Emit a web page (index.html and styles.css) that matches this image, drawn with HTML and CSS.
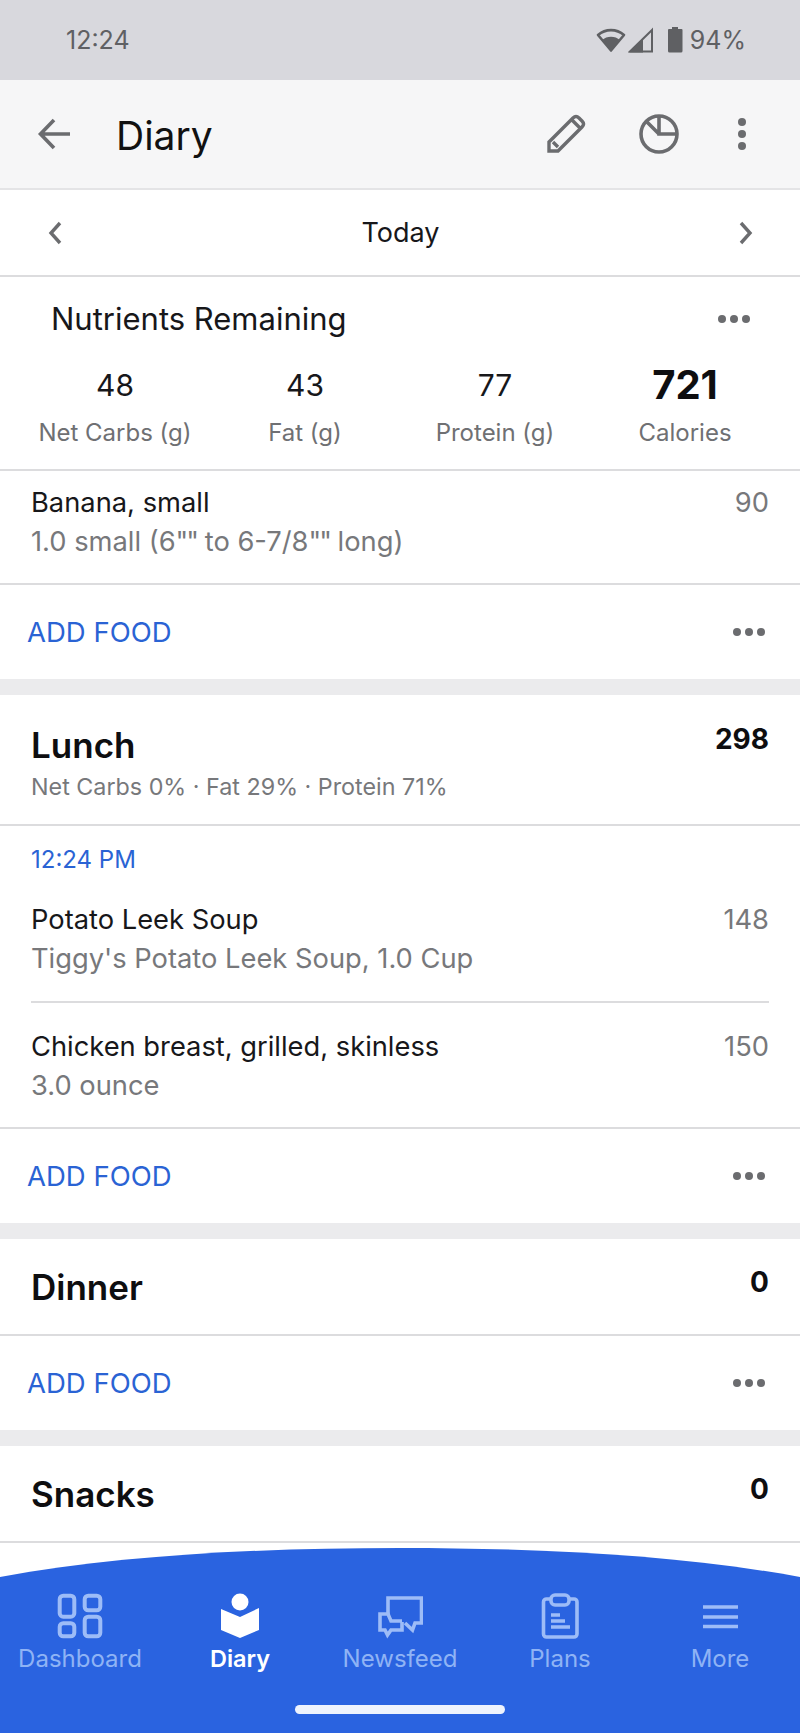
FILE: index.html
```html
<!DOCTYPE html>
<html lang="en">
<head>
  <meta charset="UTF-8">
  <meta name="viewport" content="width=device-width, initial-scale=1">
  <title>Diary</title>
  <link rel="stylesheet" href="styles.css">
</head>
<body>
  <div class="status-bar">
    <span class="status-time">12:24</span>
    <div class="status-icons">
      <svg class="ic-wifi" width="30" height="26" viewBox="0 0 30 26"><path d="M15 23.500 2 8C9.500 1.500 20.500 1.500 28 8Z" fill="none" stroke="#5f6063" stroke-width="2.600" stroke-linejoin="round"/><path d="M15 24 6 13C11 8.500 19 8.500 24 13Z" fill="#5f6063"/></svg>
      <svg class="ic-signal" width="26" height="26" viewBox="0 0 26 26"><path d="M24 3 2 24.500H24Z" fill="none" stroke="#5f6063" stroke-width="2"/><path d="M15 12 1 25.500H15Z" fill="#5f6063"/></svg>
      <svg class="ic-battery" width="16" height="26" viewBox="0 0 16 26"><path d="M5 0H11V2H14.500A1 1 0 0 1 15.500 3V24A1.500 1.500 0 0 1 14 25.500H2.500A1.500 1.500 0 0 1 1 24V3A1 1 0 0 1 2 2H5Z" fill="#5f6063"/></svg>
      <span class="status-pct">94%</span>
    </div>
  </div>

  <header class="toolbar">
    <svg class="back" width="36" height="36" viewBox="0 0 36 36"><path d="M33 18H5M17 4 3.500 18 17 32" fill="none" stroke="#6b6c6f" stroke-width="3.600"/></svg>
    <h1>Diary</h1>
    <svg class="tool-pen" width="40" height="40" viewBox="0 0 40 40"><path d="M3 37V28L27 4C29 2 31 2 33 4L36 7C38 9 38 11 36 13L12 37ZM26 6 34 14M7 28 12 33" fill="none" stroke="#6b6c6f" stroke-width="3.400"/></svg>
    <svg class="tool-pie" width="42" height="42" viewBox="0 0 42 42"><circle cx="21" cy="21" r="18" fill="none" stroke="#6b6c6f" stroke-width="3.600"/><path d="M21 3V21H39M8 8 21 21" fill="none" stroke="#6b6c6f" stroke-width="3.600"/></svg>
    <svg class="tool-more" width="12" height="36" viewBox="0 0 12 36"><circle cx="6" cy="6" r="4" fill="#6b6c6f"/><circle cx="6" cy="18" r="4" fill="#6b6c6f"/><circle cx="6" cy="30" r="4" fill="#6b6c6f"/></svg>
  </header>

  <div class="date-row">
    <svg width="16" height="26" viewBox="0 0 16 26"><path d="M13 3 4 13 13 23" fill="none" stroke="#6b6c6f" stroke-width="3.400"/></svg>
    <span>Today</span>
    <svg width="16" height="26" viewBox="0 0 16 26"><path d="M3 3 12 13 3 23" fill="none" stroke="#6b6c6f" stroke-width="3.400"/></svg>
  </div>

  <section class="nutrients">
    <div class="nutrients-head">
      <h2>Nutrients Remaining</h2>
      <div class="dots"><i></i><i></i><i></i></div>
    </div>
    <div class="nutrients-grid">
      <div class="nutrient"><b>48</b><span>Net Carbs (g)</span></div>
      <div class="nutrient"><b>43</b><span>Fat (g)</span></div>
      <div class="nutrient"><b>77</b><span>Protein (g)</span></div>
      <div class="nutrient calories"><b>721</b><span>Calories</span></div>
    </div>
  </section>

  <div class="food first">
    <div>
      <div class="food-name">Banana, small</div>
      <div class="food-desc">1.0 small (6<span class="tight">""</span> to 6-7/8<span class="tight">""</span> long)</div>
    </div>
    <span class="food-cal">90</span>
  </div>
  <div class="add-food"><a href="#">ADD FOOD</a><div class="dots"><i></i><i></i><i></i></div></div>

  <section class="meal meal-lunch">
    <div class="meal-title">
      <h3>Lunch</h3>
      <p>Net Carbs 0% · Fat 29% · Protein 71%</p>
    </div>
    <b class="meal-cal">298</b>
  </section>
  <div class="foods">
    <div class="food-time">12:24 PM</div>
    <div class="food lunch-item">
      <div>
        <div class="food-name">Potato Leek Soup</div>
        <div class="food-desc">Tiggy's Potato Leek Soup, 1.0 Cup</div>
      </div>
      <span class="food-cal">148</span>
    </div>
    <div class="food lunch-item second">
      <div>
        <div class="food-name">Chicken breast, grilled, skinless</div>
        <div class="food-desc">3.0 ounce</div>
      </div>
      <span class="food-cal">150</span>
    </div>
  </div>
  <div class="add-food"><a href="#">ADD FOOD</a><div class="dots"><i></i><i></i><i></i></div></div>

  <section class="meal"><h3>Dinner</h3><b class="meal-cal">0</b></section>
  <div class="add-food"><a href="#">ADD FOOD</a><div class="dots"><i></i><i></i><i></i></div></div>

  <section class="meal"><h3>Snacks</h3><b class="meal-cal">0</b></section>

  <nav class="bottom-nav">
    <svg class="nav-curve" width="800" height="32" viewBox="0 0 800 32"><path d="M0 32V30C120 8 260 1 400 1S680 8 800 30V32Z" fill="#2a63e0"/></svg>
    <div class="nav-items">
      <a class="nav-item">
        <svg width="46" height="46" viewBox="0 0 46 46" fill="none" stroke="#9dbcf7" stroke-width="4"><rect x="2.700" y="2.700" width="14.600" height="21" rx="3.500"/><rect x="27.700" y="2.700" width="15.600" height="14.600" rx="3.500"/><rect x="2.700" y="30.200" width="14.600" height="13.100" rx="3.500"/><rect x="27.700" y="23.700" width="15.600" height="19.600" rx="3.500"/></svg>
        <span>Dashboard</span>
      </a>
      <a class="nav-item active">
        <svg width="46" height="46" viewBox="0 0 46 46"><circle cx="23" cy="9" r="8.500" fill="#fff"/><path d="M4 16 23 24 42 15V37L23 45 4 37Z" fill="#fff"/></svg>
        <span>Diary</span>
      </a>
      <a class="nav-item">
        <svg width="46" height="46" viewBox="0 0 46 46" fill="none" stroke="#9dbcf7" stroke-width="3.600"><path d="M11 22V5H44.500V30H38L35.500 37 28 30"/><path d="M25 29V37H14L10.500 42 8 37H3V21H11L14 28H25"/></svg>
        <span>Newsfeed</span>
      </a>
      <a class="nav-item">
        <svg width="46" height="46" viewBox="0 0 46 46" fill="none" stroke="#9dbcf7" stroke-width="3.600"><rect x="6.500" y="6" width="33.500" height="38" rx="3"/><rect x="14" y="2" width="18" height="10" rx="4" fill="#2a63e0"/><path d="M14 22H23M14 28H28M14 34H33"/></svg>
        <span>Plans</span>
      </a>
      <a class="nav-item">
        <svg width="46" height="46" viewBox="0 0 46 46" fill="none" stroke="#9dbcf7" stroke-width="3.600"><path d="M6 14H41M6 24H41M6 33.500H41"/></svg>
        <span>More</span>
      </a>
    </div>
    <div class="home-bar"></div>
  </nav>
</body>
</html>
```

FILE: styles.css
```css
* {
  box-sizing: border-box;
}

body {
  margin: 0;
  width: 800px;
  height: 1733px;
  overflow: hidden;
  display: flex;
  flex-direction: column;
  background: #fff;
  font-family: Inter, "Liberation Sans", sans-serif;
  color: #17171a;
}

h1, h2, h3, p {
  margin: 0;
  font-weight: 400;
}

svg {
  display: block;
  flex: none;
}

/* top of the screen */
.status-bar {
  height: 80px;
  background: #d8d8dd;
  display: flex;
  justify-content: space-between;
  align-items: center;
  padding: 0 54px 0 66px;
  color: #5f6063;
  font-size: 25px;
}

.status-icons {
  display: flex;
  align-items: center;
}

.ic-wifi {
  margin-right: 2px;
}

.ic-signal {
  margin-right: 13px;
}

.ic-battery {
  margin-right: 7px;
}

.toolbar {
  height: 110px;
  background: #f6f6f7;
  border-bottom: 2px solid #e4e4e6;
  display: flex;
  align-items: center;
  padding: 0 52px 0 37px;
}

.toolbar h1 {
  font-size: 39px;
  padding-top: 2px;
  margin-left: 43px;
  margin-right: auto;
  color: #111;
}

.tool-pen {
  margin-right: 52px;
}

.tool-pie {
  margin-right: 56px;
}

.date-row {
  height: 87px;
  border-bottom: 2px solid #dcdcde;
  display: flex;
  justify-content: space-between;
  align-items: center;
  padding: 0 46px 0 47px;
  font-size: 27px;
}

/* nutrients card */
.nutrients {
  height: 194px;
  border-bottom: 2px solid #dcdcde;
  padding-top: 24px;
}

.nutrients-head {
  display: flex;
  justify-content: space-between;
  align-items: center;
  padding: 0 50px 0 51px;
}

.nutrients-head h2 {
  font-size: 31px;
  line-height: 36px;
}

.dots {
  display: flex;
  gap: 4px;
}

.dots i {
  width: 8px;
  height: 8px;
  border-radius: 50%;
  background: #6b6c6f;
}

.nutrients-grid {
  display: grid;
  grid-template-columns: repeat(4, 190px);
  justify-content: center;
  margin-top: 26px;
  text-align: center;
}

.nutrient b {
  display: block;
  font-weight: 400;
  font-size: 30px;
  line-height: 44px;
}

.nutrient span {
  display: block;
  margin-top: 11px;
  font-size: 24px;
  color: #6f7073;
}

.calories b {
  font-size: 40px;
  font-weight: 700;
  color: #0e0e10;
}

/* food rows */
.food {
  display: flex;
  justify-content: space-between;
  padding: 0 31px;
}

.food.first {
  height: 114px;
  padding-top: 14px;
  border-bottom: 2px solid #dcdcde;
}

.food-name {
  font-size: 27.3px;
  line-height: 36px;
}

.food-desc {
  font-size: 27.3px;
  line-height: 36px;
  margin-top: 3px;
  color: #77787b;
}

.tight {
  letter-spacing: -2px;
}

.food-cal {
  font-size: 27.3px;
  line-height: 36px;
  color: #77787b;
}

.add-food {
  height: 110px;
  border-bottom: 16px solid #ebebed;
  display: flex;
  justify-content: space-between;
  align-items: center;
  padding: 0 35px 0 27px;
}

.add-food a {
  font-size: 27.5px;
  color: #2a63d4;
  text-decoration: none;
}

.meal {
  height: 97px;
  border-bottom: 2px solid #dcdcde;
  display: flex;
  justify-content: space-between;
  align-items: center;
  padding: 0 31px;
}

.meal h3 {
  font-size: 35px;
  font-weight: 600;
  color: #0e0e10;
}

.meal-cal {
  font-size: 28px;
  font-weight: 700;
  color: #0e0e10;
  align-self: flex-start;
  padding-top: 26px;
}

.meal-lunch {
  height: 131px;
  padding-top: 5px;
}

.meal-lunch .meal-title p {
  margin-top: 6px;
  font-size: 23.3px;
  color: #77787b;
}

.meal-lunch .meal-cal {
  padding-top: 22px;
}

.foods {
  height: 303px;
  border-bottom: 2px solid #dcdcde;
}

.food-time {
  padding: 19px 31px 0;
  font-size: 24px;
  line-height: 30px;
  color: #2a63d4;
}

.lunch-item {
  margin: 27px 31px 0;
  padding: 0 0 24px;
  border-bottom: 2px solid #dcdcde;
}

.lunch-item.second {
  margin-top: 26px;
  border-bottom: 0;
}

/* bottom navigation */
.bottom-nav {
  margin-top: auto;
  height: 186px;
  display: flex;
  flex-direction: column;
}

.nav-items {
  flex: 1;
  background: #2a63e0;
  display: grid;
  grid-template-columns: repeat(5, 160px);
  padding-top: 14px;
}

.nav-item {
  display: flex;
  flex-direction: column;
  align-items: center;
  color: #8fb3f5;
  font-size: 24px;
}

.nav-item span {
  margin-top: 5px;
}

.nav-item.active {
  color: #fff;
  font-weight: 600;
  font-size: 23.5px;
}

.home-bar {
  background: #2a63e0;
  height: 31px;
  position: relative;
}

.home-bar::after {
  content: "";
  position: absolute;
  left: 295px;
  top: 3px;
  width: 210px;
  height: 9px;
  border-radius: 5px;
  background: #eef3fd;
}
```
